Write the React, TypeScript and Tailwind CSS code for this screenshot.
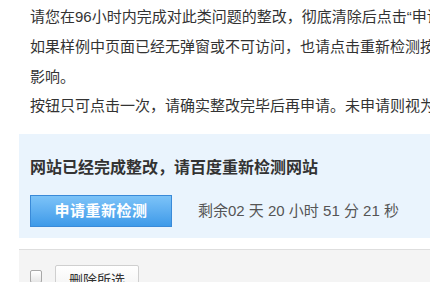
import React from 'react';

const font = { fontFamily: '"Liberation Sans", "Noto Sans CJK SC", sans-serif' };

const App: React.FC = () => {
  return (
    <div className="w-[430px] h-[282px] overflow-hidden bg-white" style={font}>
      <div className="pl-[19px] w-[700px]">
        {/* notice text */}
        <div className="pl-[11px] pt-[2px] text-[15px] leading-[30px] text-[#333]">
          <p className="whitespace-nowrap">请您在96小时内完成对此类问题的整改，彻底清除后点击“申请重新检测”按钮，</p>
          <p className="whitespace-nowrap">如果样例中页面已经无弹窗或不可访问，也请点击重新检测按钮，否则将对网站产生</p>
          <p className="whitespace-nowrap">影响。</p>
          <p className="whitespace-nowrap leading-[28px]">按钮只可点击一次，请确实整改完毕后再申请。未申请则视为未整改。</p>
        </div>

        {/* recheck panel */}
        <div className="mt-[14px] bg-[#eaf4fd] pl-[11px] pt-[22px] pb-[11px]">
          <div className="text-[16px] leading-[24px] font-bold text-[#333]">
            网站已经完成整改，请百度重新检测网站
          </div>
          <div className="mt-[15px] flex items-center">
            <button className="w-[142px] h-[32px] border border-[#3a8ad8] bg-gradient-to-b from-[#7cc3f8] to-[#3d9ae9] text-white text-[15px] font-bold tracking-[0.5px]">
              申请重新检测
            </button>
            <span className="ml-[26px] text-[15px] text-[#555]">
              剩余02 天 20 小时 51 分 21 秒
            </span>
          </div>
        </div>

        {/* list toolbar */}
        <div className="mt-[11px] border-t border-[#dedede] bg-[#f4f4f4] h-[60px] pl-[11px] pt-[15px] flex items-start">
          <span className="mt-[5px] w-[12px] h-[13px] rounded-[2px] border border-[#a8a8a8] bg-gradient-to-b from-white to-[#e6e6e6]" />
          <button className="ml-[13px] w-[84px] h-[30px] border border-[#cfcfcf] rounded-[2px] bg-gradient-to-b from-white to-[#f0f0f0] text-[14px] text-[#333]">
            删除所选
          </button>
        </div>
      </div>
    </div>
  );
};

export default App;
